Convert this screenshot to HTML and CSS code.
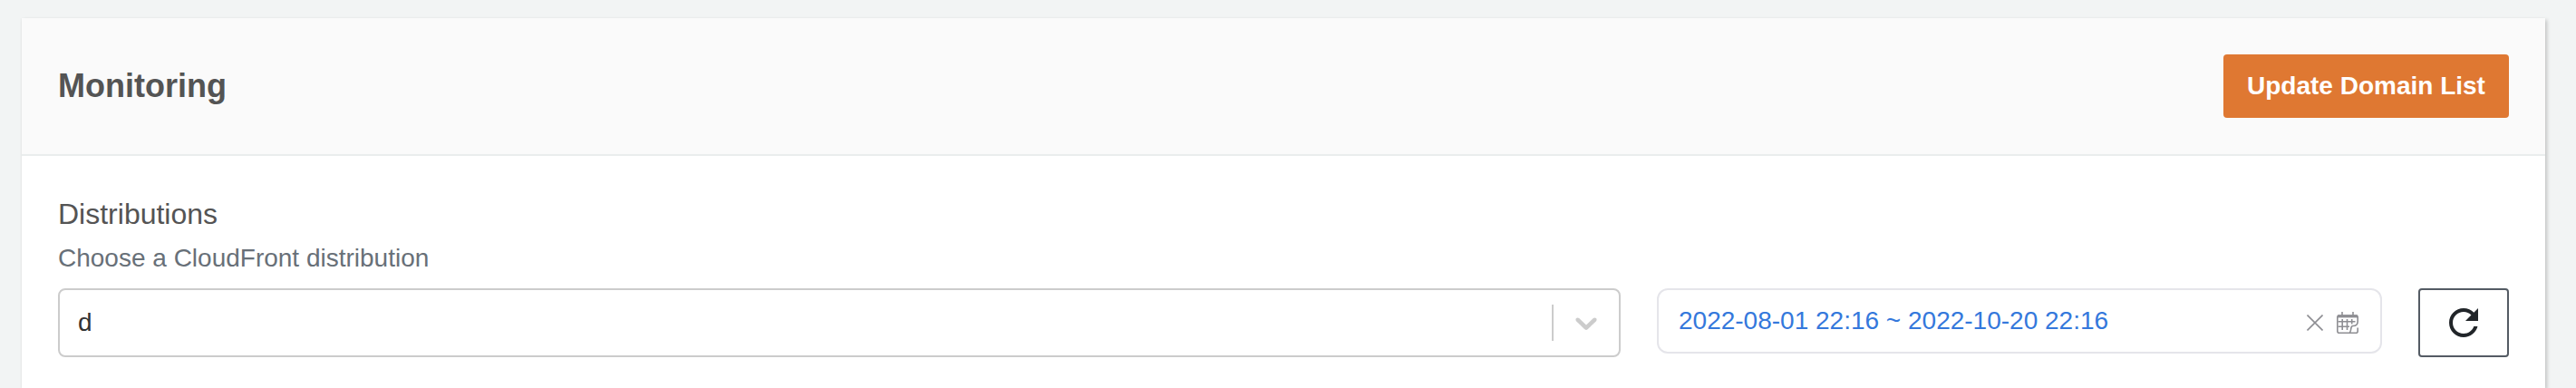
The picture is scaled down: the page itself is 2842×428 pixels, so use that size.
FILE: index.html
```html
<!DOCTYPE html>
<html lang="en">
<head>
<meta charset="utf-8">
<title>Monitoring</title>
<link rel="stylesheet" href="styles.css">
</head>
<body>
<main class="card">
  <header class="card-header">
    <h1 class="title">Monitoring</h1>
    <button class="btn-primary">Update Domain List</button>
  </header>
  <section class="card-body">
    <div class="label">Distributions</div>
    <div class="description">Choose a CloudFront distribution</div>
    <div class="filters">
      <div class="select">
        <span class="select-value">d</span>
        <span class="select-separator"></span>
        <svg class="select-arrow" viewBox="0 0 20 20"><path d="M4.516 7.548c0.436-0.446 1.043-0.481 1.576 0l3.908 3.747 3.908-3.747c0.533-0.481 1.141-0.446 1.574 0 0.436 0.445 0.408 1.197 0 1.615-0.406 0.418-4.695 4.502-4.695 4.502-0.217 0.223-0.502 0.335-0.787 0.335s-0.57-0.112-0.789-0.335c0 0-4.287-4.084-4.695-4.502s-0.436-1.17 0-1.615z"/></svg>
      </div>
      <div class="date-range">
        <span class="date-text">2022-08-01 22:16 ~ 2022-10-20 22:16</span>
        <svg class="icon-clear" viewBox="0 0 18 18"><path d="M.5.5l17 17M17.5.5l-17 17"/></svg>
        <svg class="icon-calendar" viewBox="0 0 24 24">
          <path class="bar" d="M1 4.9h22"/>
          <path d="M6 0v4M18 0v4M14.5 23.2H2.8Q.8 23.2.8 21.2V6Q.8 4 2.8 4H21.2Q23.2 4 23.2 6V10.5Q23.200 15.500 18 15.500Q16 15.500 15.800 18.500Q15.500 21.500 14.300 23.200M23.200 17.500V21.200Q23.200 23.200 21.200 23.200H14"/>
          <path d="M1.500 10.800H20.500M1.500 16.200H14M6.200 8V20M11.500 8V20M16.700 8V13.500"/>
        </svg>
      </div>
      <button class="btn-refresh" aria-label="Refresh">
        <svg class="icon-refresh" viewBox="0 0 24 24"><path d="M17.65 6.35C16.2 4.9 14.21 4 12 4c-4.42 0-7.99 3.58-7.99 8s3.57 8 7.99 8c3.73 0 6.84-2.550 7.730-6h-2.080c-.82 2.330-3.040 4-5.650 4-3.310 0-6-2.690-6-6s2.690-6 6-6c1.660 0 3.140.69 4.220 1.780L13 11h7V4l-2.350 2.350z"/></svg>
      </button>
    </div>
  </section>
</main>
</body>
</html>
```
FILE: styles.css
```css
* { box-sizing: border-box; }
body {
  margin: 0;
  height: 428px;
  padding: 20px 34px 0 24px;
  background: #f2f4f4;
  font-family: "Liberation Sans", Arial, sans-serif;
}
button { font-family: inherit; margin: 0; }
.card {
  height: 408px;
  background: #fff;
  box-shadow: 2px 2px 4px 0 rgba(0, 0, 0, 0.2), -1px 0 2px 0 rgba(0, 0, 0, 0.03);
}
.card-header {
  display: flex;
  align-items: center;
  justify-content: space-between;
  height: 152px;
  padding: 0 40px;
  background: #fafafa;
  border-bottom: 2px solid #eaeded;
}
.title {
  margin: 0;
  font-size: 36px;
  line-height: 54px;
  font-weight: 700;
  color: #545454;
}
.btn-primary {
  width: 315px;
  height: 70px;
  padding: 0;
  border: 0;
  border-radius: 4px;
  background: #df7832;
  color: #fff;
  font-size: 28px;
  font-weight: 700;
  white-space: nowrap;
}
.card-body { padding: 40px 40px 0; }
.label {
  font-size: 32px;
  line-height: 48px;
  color: #545454;
}
.description {
  font-size: 28px;
  line-height: 42px;
  margin-top: 4px;
  color: #687078;
}
.filters {
  display: flex;
  align-items: flex-start;
  gap: 40px;
  margin-top: 12px;
}
.select {
  display: flex;
  align-items: center;
  width: 1724px;
  height: 76px;
  padding: 0 16px 0 20px;
  border: 2px solid #ccc;
  border-radius: 8px;
  color: #333;
  font-size: 28px;
}
.select-value { flex: 1; }
.select-separator { width: 2px; height: 40px; background: #ccc; }
.select-arrow { width: 40px; height: 40px; margin-left: 16px; fill: #ccc; }
.date-range {
  display: flex;
  align-items: center;
  width: 800px;
  height: 72px;
  padding: 0 24px 0 22px;
  border: 2px solid #e5e5ea;
  border-radius: 12px;
  color: #3478dc;
  font-size: 28px;
}
.date-text { flex: 1; }
.icon-clear, .icon-calendar {
  fill: none;
  stroke: #8e8e93;
  stroke-width: 1.6;
}
.icon-clear { width: 18px; height: 18px; margin: 4px 15px 0 0; }
.icon-calendar { width: 24px; height: 24px; margin-top: 4px; overflow: visible; }
.icon-calendar .bar { stroke-width: 3; }
.btn-refresh {
  display: flex;
  align-items: center;
  justify-content: center;
  width: 100px;
  height: 76px;
  padding: 0;
  border: 2px solid #545b64;
  border-radius: 4px;
  background: #fff;
}
.icon-refresh { width: 48px; height: 48px; fill: #212529; }
```
